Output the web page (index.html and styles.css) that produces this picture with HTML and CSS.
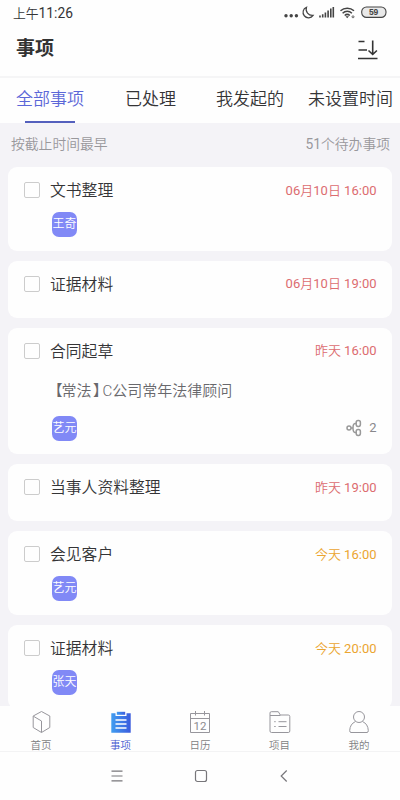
FILE: index.html
```html
<!DOCTYPE html>
<html lang="zh-CN">
<head>
<meta charset="utf-8">
<title>事项</title>
<link rel="stylesheet" href="styles.css">
</head>
<body>
<div class="app">
  <div class="status">
    <span class="clock">上午<b class="digits">11:26</b></span>
    <svg class="status-icons" width="106" height="16" viewBox="0 0 106 16" fill="none" stroke="#444">
      <g fill="#444" stroke="none"><circle cx="3" cy="9.700" r="1.700"/><circle cx="8.200" cy="9.700" r="1.700"/><circle cx="13.400" cy="9.700" r="1.700"/></g>
      <path d="M23.500 1.200a5.500 5.500 0 1 0 6.600 8.200A6.200 6.200 0 0 1 23.500 1.200Z" stroke-width="1.200"/>
      <path d="M37 9.500v2M39.700 8.200v3.300M42.400 6.500v5M45.100 4.500v7M47.800 2.500v9M50.300 1v10.500" stroke-width="1.600"/>
      <path d="M57.500 4.800a10 10 0 0 1 13.500 0M59.600 7.200a6.800 6.800 0 0 1 9.300 0M61.700 9.500a3.800 3.800 0 0 1 5.100 0" stroke-width="1.500"/>
      <path d="M62.500 10.300 64.200 12.300 66 10.300Z" fill="#444" stroke="none"/><circle cx="70" cy="10.800" r="1" stroke-width=".8"/>
      <rect x="78.700" y="1" width="24.300" height="10.400" rx="4.800" fill="#e9e9e9" stroke-width="1.100"/>
      <text x="90.500" y="9.400" text-anchor="middle" class="battery">59</text>
    </svg>
  </div>
  <header class="header">
    <h1>事项</h1>
    <svg width="22" height="22" viewBox="0 0 22 22" fill="none" stroke="#333" stroke-width="1.600"><path d="M1.500 2.500h6M1.500 11h8.500M1 19.500h19.500M15.700 1.500v14M11.500 11.500l4.200 4 4.200-4"/></svg>
  </header>
  <nav class="tabs">
    <span class="tab active">全部事项</span><span class="tab">已处理</span><span class="tab">我发起的</span><span class="tab">未设置时间</span>
  </nav>
  <div class="summary"><span>按截止时间最早</span><span><b>51</b>个待办事项</span></div>
  <main class="list">
    <article class="card">
      <div class="row"><i class="check"></i><span class="name">文书整理</span><time class="late"><b>06</b>月<b>10</b>日<b> 16:00</b></time></div>
      <div class="foot"><span class="avatar">王奇</span></div>
    </article>
    <article class="card short">
      <div class="row"><i class="check"></i><span class="name">证据材料</span><time class="late"><b>06</b>月<b>10</b>日<b> 19:00</b></time></div>
    </article>
    <article class="card tall">
      <div class="row"><i class="check"></i><span class="name">合同起草</span><time class="late">昨天<b> 16:00</b></time></div>
      <p class="project"><span class="open">【</span>常法<span class="close">】</span>C公司常年法律顾问</p>
      <div class="foot"><span class="avatar">艺元</span>
        <span class="subs"><svg width="16" height="18" viewBox="0 0 16 18" fill="none" stroke="#999" stroke-width="1.500"><circle cx="3" cy="9" r="2"/><rect x="10.200" y="1.600" width="4.200" height="5.800" rx="1.800"/><rect x="10.200" y="10.600" width="4.200" height="5.800" rx="1.800"/><path d="M5 9h2M10 4.500H9Q7 4.700 7 9t2 4.500h1"/></svg><b>2</b></span>
      </div>
    </article>
    <article class="card short">
      <div class="row"><i class="check"></i><span class="name">当事人资料整理</span><time class="late">昨天<b> 19:00</b></time></div>
    </article>
    <article class="card">
      <div class="row"><i class="check"></i><span class="name">会见客户</span><time class="today">今天<b> 16:00</b></time></div>
      <div class="foot"><span class="avatar">艺元</span></div>
    </article>
    <article class="card">
      <div class="row"><i class="check"></i><span class="name">证据材料</span><time class="today">今天<b> 20:00</b></time></div>
      <div class="foot"><span class="avatar">张天</span></div>
    </article>
  </main>
  <nav class="bottom">
    <div class="item"><svg width="24" height="24" viewBox="0 0 24 24"><path d="M12.500 1.500 20.800 6v11.500L12.500 22.500 4.200 17.500V6ZM4.500 6.300l8 4.700v11.300"/></svg><span>首页</span></div>
    <div class="item active"><svg width="24" height="24" viewBox="0 0 24 24">
      <defs><linearGradient id="blue" x1="0" y1="0" x2="1" y2="0"><stop offset="0" stop-color="#419df0"/><stop offset="1" stop-color="#3b5bdd"/></linearGradient></defs>
      <path class="clip" d="M2.300 3.300h4.200V6h11V3.300h4.200v19.400H2.300Z"/><path class="clip" d="M7.800 1.800h8.400v3H7.800Z"/><path class="lines" d="M6.500 10h11M6.500 14h11M6.500 18h11"/></svg><span>事项</span></div>
    <div class="item"><svg width="24" height="24" viewBox="0 0 24 24"><path d="M2.500 3.500h19v19h-19ZM2.500 8.500h19M7.500 1v4.500M16.500 1v4.500"/><text x="12" y="19.800" text-anchor="middle" class="day">12</text></svg><span>日历</span></div>
    <div class="item"><svg width="24" height="24" viewBox="0 0 24 24"><path d="M2 5V3q0-1.300 1.300-1.300h7l2 3.300h8q1.500 0 1.500 1.500V21q0 1.500-1.500 1.500H3.500Q2 22.500 2 21ZM2 5.500h10.500M10.500 11.700h8M10.500 16.500h8M6.200 11.700h1.500M6.200 16.500h1.500"/></svg><span>项目</span></div>
    <div class="item"><svg width="24" height="24" viewBox="0 0 24 24"><circle cx="12" cy="7" r="5.500"/><path d="M8.500 11.500Q3 14 2.700 20.500q0 2 1.300 2h16q1.300 0 1.300-2Q21 14 15.500 11.500"/></svg><span>我的</span></div>
  </nav>
  <div class="system">
    <svg width="14" height="14" viewBox="0 0 14 14"><path d="M1.500 2.200h11M1.500 7h11M1.500 11.800h11"/></svg>
    <svg width="14" height="14" viewBox="0 0 14 14"><rect x="1.500" y="1.500" width="11" height="11" rx="2"/></svg>
    <svg width="14" height="14" viewBox="0 0 14 14"><path d="M9.700 1.500 4.200 7l5.500 5.500"/></svg>
  </div>
</div>
</body>
</html>
```
FILE: styles.css
```css
* { box-sizing: border-box; }
body { margin: 0; font-family: Roboto, "Noto Sans CJK SC", sans-serif; font-weight: 350; color: #343436; }
svg { display: block; flex: none; }
b { font-weight: 400; }
.app { width: 400px; height: 800px; overflow: hidden; display: flex; flex-direction: column; background: #f4f3f7; }
.status, .header, .tabs, .summary, .bottom, .system { flex: none; }
.status { height: 26px; padding: 1px 11px 0 13px; display: flex; align-items: center; justify-content: space-between; background: #fefefe; font-size: 12.800px; }
.clock { line-height: 24px; }
.digits { font-size: 13.800px; }
.status-icons { margin-top: 1px; }
.battery { font: bold 8.500px "Liberation Sans", sans-serif; letter-spacing: -0.3px; fill: #444; stroke: none; }
.header { height: 52px; padding: 0 21px 8px 16px; display: flex; align-items: center; justify-content: space-between; background: #fefefe; border-bottom: 2px solid #f5f5f6; }
.header h1 { margin: 3px 0 0; font-size: 19px; line-height: 28px; color: #333; }
.header svg { margin-top: 5px; }
.tabs { height: 45px; padding-left: 16px; display: grid; grid-template-columns: 109px 91px 92px 92px; background: #fefefe; font-size: 17px; line-height: 43px; white-space: nowrap; }
.tab.active { width: 68px; color: #5b67d8; display: flex; flex-direction: column; align-items: center; }
.tab.active::after { content: ""; width: 50px; height: 2px; background: #5460bd; }
.summary { height: 44px; padding: 0 10px 5px 11px; display: flex; align-items: center; justify-content: space-between; font-size: 13.800px; color: #99989c; }
.list { flex: 1; min-height: 0; overflow: hidden; padding: 0 8px; display: flex; flex-direction: column; gap: 10.100px; }
.card { height: 83.700px; flex: none; padding: 12px 15.500px 0 16px; border-radius: 9px; background: #fefefe; }
.card.short { height: 57px; }
.card.tall { height: 126.400px; }
.row { height: 22px; display: flex; align-items: center; }
.check { width: 16px; height: 16px; margin-right: 10px; border: 1px solid #ccc; border-radius: 2px; }
.name { font-size: 15.800px; line-height: 22px; margin-top: 2px; }
time { margin: 1px 0 0 auto; font-size: 13px; line-height: 22px; white-space: pre; }
.late { color: #dc6c70; }
.today { color: #eba530; }
.project { margin: 18px 0 0 23.500px; font-size: 15px; line-height: 22px; color: #68686c; }
.open { letter-spacing: -1px; }
.close { margin-left: 1.500px; letter-spacing: -5.500px; }
.foot { height: 25px; margin: 11px 0 0 28px; display: flex; justify-content: space-between; align-items: center; }
.tall .foot { margin-top: 14px; }
.avatar { width: 25px; height: 25px; border-radius: 7px; background: #8189f6; color: #fff; font-size: 12px; line-height: 24px; text-align: center; white-space: nowrap; }
.subs { display: flex; align-items: center; gap: 7px; margin-top: -1px; font-size: 13px; color: #88888c; }
.bottom { height: 46px; display: flex; justify-content: space-between; padding: 4px 20px 0; background: #fefefe; border-bottom: 1px solid #f3f3f4; }
.item { width: 42px; display: flex; flex-direction: column; align-items: center; font-size: 10.500px; line-height: 16px; color: #7f7e82; }
.item svg { fill: none; stroke: #97969c; stroke-width: 1; }
.item span { margin-top: 4px; }
.item.active { color: #4657d0; }
.item .clip { fill: url(#blue); stroke: none; }
.item .lines { stroke: #fff; stroke-width: 1.300; }
.day { font: 11.500px Roboto, sans-serif; fill: #8c8b90; stroke: none; }
.system { height: 48px; padding: 0 109px 0 110px; display: flex; align-items: center; justify-content: space-between; background: #fefefe; }
.system svg { fill: none; stroke: #77767a; stroke-width: 1.200; }
```
